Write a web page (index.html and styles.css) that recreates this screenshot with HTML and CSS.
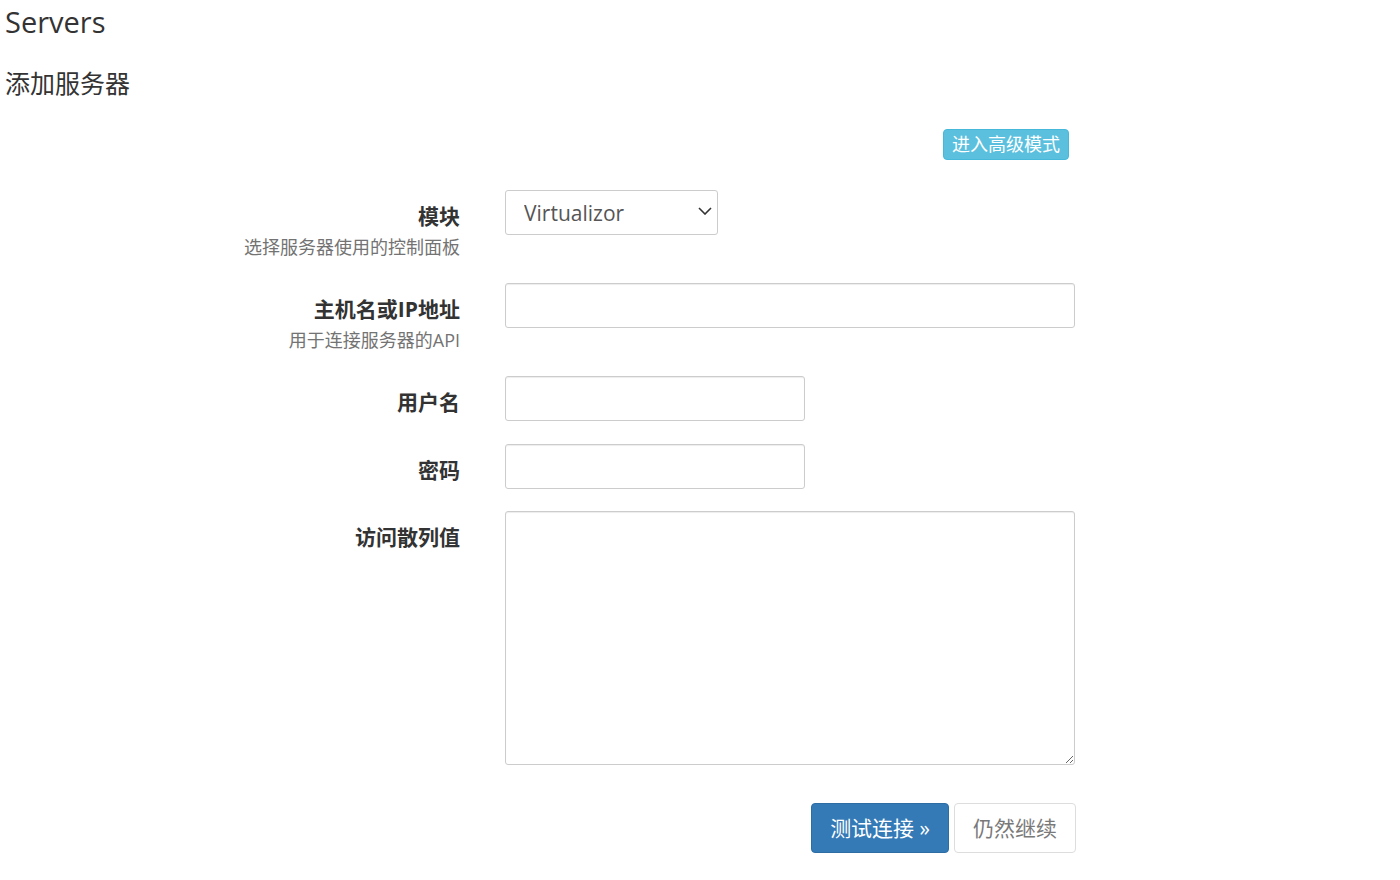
FILE: index.html
```html
<!DOCTYPE html>
<html lang="zh">
  <head>
    <meta charset="UTF-8" />
    <title>Servers</title>
    <link rel="stylesheet" href="styles.css">
  </head>
  <body>
    <h1>Servers</h1>
    <h2>添加服务器</h2>

    <div class="toolbar">
      <button class="btn btn-info btn-xs">进入高级模式</button>
    </div>

    <form class="form-horizontal">
      <div class="form-row">
        <div class="label-col">
          <label class="control-label">模块</label>
          <div class="help">选择服务器使用的控制面板</div>
        </div>
        <div class="control-col">
          <div class="select-wrap">
            <select class="form-control select">
              <option>Virtualizor</option>
            </select>
            <svg class="chevron" width="14" height="8" viewBox="0 0 14 8">
              <path d="M1 1 L7 7 L13 1" fill="none" stroke="#333" stroke-width="1.6" />
            </svg>
          </div>
        </div>
      </div>

      <div class="form-row">
        <div class="label-col">
          <label class="control-label">主机名或IP地址</label>
          <div class="help">用于连接服务器的API</div>
        </div>
        <div class="control-col">
          <input type="text" class="form-control input-wide" />
        </div>
      </div>

      <div class="form-row">
        <div class="label-col">
          <label class="control-label">用户名</label>
        </div>
        <div class="control-col">
          <input type="text" class="form-control input-short" />
        </div>
      </div>

      <div class="form-row form-row-tight">
        <div class="label-col">
          <label class="control-label">密码</label>
        </div>
        <div class="control-col">
          <input type="password" class="form-control input-short" />
        </div>
      </div>

      <div class="form-row">
        <div class="label-col">
          <label class="control-label">访问散列值</label>
        </div>
        <div class="control-col">
          <textarea class="form-control textarea"></textarea>
        </div>
      </div>

      <div class="actions">
        <button type="button" class="btn btn-primary btn-lg">测试连接 &raquo;</button>
        <button type="button" class="btn btn-default btn-lg" disabled>仍然继续</button>
      </div>
    </form>
  </body>
</html>
```

FILE: styles.css
```css
body {
  margin: 0;
  padding: 0 0 0 5px;
  font-family: "Open Sans", "Noto Sans CJK SC", sans-serif;
  color: #333;
  background: #fff;
}

h1 {
  margin: 2px 0 0;
  font-size: 29px;
  font-weight: 400;
  line-height: 40px;
}

h2 {
  margin: 23px 0 0;
  font-size: 25px;
  font-weight: 400;
  line-height: 36px;
}

.toolbar {
  display: flex;
  justify-content: flex-end;
  width: 1064px;
  margin-top: 28px;
}

.btn {
  font-family: "Open Sans", "Noto Sans CJK SC", sans-serif;
  border: 1px solid transparent;
  cursor: pointer;
  box-sizing: border-box;
}

.btn-xs {
  height: 31px;
  padding: 0 8px;
  font-size: 18px;
  line-height: 29px;
  border-radius: 4px;
}

.btn-info {
  background-color: #5bc0de;
  border-color: #46b8da;
  color: #fff;
}

.form-horizontal {
  margin-top: 30px;
  width: 1071px;
}

.form-row {
  display: flex;
  align-items: flex-start;
  margin-bottom: 23px;
}

.form-row-tight {
  margin-bottom: 22px;
}

.label-col {
  width: 455px;
  flex: none;
  text-align: right;
  padding-top: 11px;
}

.control-label {
  display: block;
  font-size: 21px;
  font-weight: 700;
  line-height: 30px;
}

.help {
  margin-top: 3px;
  font-size: 18px;
  line-height: 26px;
  color: #737373;
}

.control-col {
  margin-left: 45px;
}

.form-control {
  display: block;
  box-sizing: border-box;
  height: 45px;
  padding: 0 17px;
  font-family: "Open Sans", "Noto Sans CJK SC", sans-serif;
  font-size: 21px;
  color: #555;
  background-color: #fff;
  border: 1px solid #ccc;
  border-radius: 3px;
  box-shadow: inset 0 1px 1px rgba(0, 0, 0, 0.075);
}

.select-wrap {
  position: relative;
  width: 213px;
}

.select {
  width: 213px;
  padding: 0 30px 0 18px;
  appearance: none;
  -webkit-appearance: none;
  box-shadow: none;
}

.chevron {
  position: absolute;
  right: 6px;
  top: 17px;
  pointer-events: none;
}

.input-wide {
  width: 570px;
}

.input-short {
  width: 300px;
}

.textarea {
  width: 570px;
  height: 254px;
  padding: 9px 17px;
}

.actions {
  display: flex;
  justify-content: flex-end;
  gap: 5px;
  margin-top: 38px;
}

.btn-lg {
  height: 50px;
  padding: 0 18px;
  font-size: 21px;
  line-height: 48px;
  border-radius: 4px;
}

.btn-primary {
  background-color: #337ab7;
  border-color: #2e6da4;
  color: #fff;
}

.btn-default {
  background-color: #fff;
  border-color: #ccc;
  color: #333;
}

.btn-default[disabled] {
  opacity: 0.65;
  cursor: not-allowed;
}
```
